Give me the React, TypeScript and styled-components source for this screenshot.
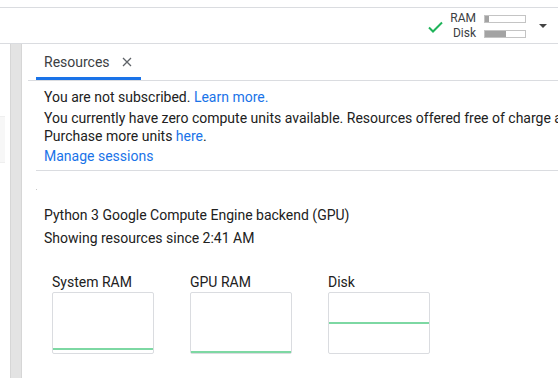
import React from "react";
import styled, { createGlobalStyle } from "styled-components";

/**
 * TYPES
 */
type UsageBarProps = {
  fill: number
}

type ChartProps = {
  label: string
  level: number
}

/**
 * STYLES
 */
const GlobalStyle = createGlobalStyle`
  html, body {
    margin: 0;
    padding: 0;
    background: #fff;
    overflow: hidden;
  }
  body {
    font-family: Roboto, "Liberation Sans", Arial, sans-serif;
    color: #212121;
  }
`;

const StyledPage = styled.div`
  width: 558px;
  height: 378px;
  display: flex;
  flex-direction: column;
  overflow: hidden;
`;

const StyledTopStrip = styled.div`
  height: 7px;
  border-bottom: 1px solid #dadce0;
`;

const StyledToolbar = styled.div`
  height: 35px;
  border-bottom: 1px solid #dadce0;
  display: flex;
  align-items: center;
  justify-content: flex-end;
  padding-right: 11px;
`;

const StyledCheck = styled.svg`
  width: 15px;
  height: 12px;
  margin: 3px 7px 0 0;
`;

const StyledUsageGrid = styled.div`
  display: grid;
  grid-template-columns: auto 42px;
  column-gap: 8px;
  row-gap: 0;
  align-items: center;
  margin-top: 1px;
`;

const StyledUsageLabel = styled.span`
  font-size: 12px;
  line-height: 15px;
  color: #3c4043;
  text-align: right;
`;

const StyledUsageBar = styled.div`
  height: 6px;
  border: 1px solid #c4c4c4;
  background: #fff;
  display: flex;
`;

const StyledUsageFill = styled.div`
  height: 100%;
  background: #a3a3a3;
`;

const StyledCaret = styled.div`
  width: 0;
  height: 0;
  margin-left: 13px;
  border-left: 4px solid transparent;
  border-right: 4px solid transparent;
  border-top: 4px solid #444;
`;

const StyledMain = styled.div`
  flex: 1;
  display: flex;
  min-height: 0;
`;

const StyledGutter = styled.div`
  width: 10px;
  padding-top: 72px;
`;

const StyledGutterCard = styled.div`
  width: 5px;
  height: 45px;
  background: #f7f7f7;
  border-top: 1px solid #efefef;
  border-bottom: 1px solid #efefef;
`;

const StyledScrollTrack = styled.div`
  width: 10px;
  background: #e3e3e3;
  border-left: 1px solid #d6d6d6;
  border-right: 1px solid #d6d6d6;
`;

const StyledPanel = styled.div`
  flex: 1;
  min-width: 0;
  display: flex;
  flex-direction: column;
  overflow: hidden;
`;

const StyledTabBar = styled.div`
  height: 36px;
  margin-left: 6px;
  border-bottom: 1px solid #dadce0;
  display: flex;
`;

const StyledTab = styled.div`
  margin-left: 8px;
  padding: 9px 9px 0 8px;
  display: flex;
  align-items: flex-start;
  gap: 12px;
  border-bottom: 3px solid #1a73e8;
  font-size: 14px;
  line-height: 18px;
  color: #3c4043;
`;

const StyledClose = styled.svg`
  width: 10px;
  height: 10px;
  margin-top: 4px;
`;

const StyledContent = styled.div`
  padding: 7px 0 0 22px;
  font-size: 14px;
  line-height: 18px;
  white-space: nowrap;
  overflow: hidden;
`;

const StyledLine = styled.div<{ $gap?: number }>`
  margin-top: ${p => p.$gap || 0}px;
`;

const StyledLink = styled.a`
  color: #1a73e8;
  text-decoration: none;
`;

const StyledDivider = styled.div`
  height: 1px;
  margin: 5px 0 0 14px;
  background: #dadce0;
`;

const StyledDot = styled.div`
  width: 1px;
  height: 1px;
  margin: 18px 0 0 14px;
  background: #c8c8c8;
`;

const StyledInfo = styled.div`
  padding: 14px 0 0 22px;
  font-size: 14px;
  line-height: 22px;
  white-space: nowrap;
  display: flex;
  flex-direction: column;
  gap: 1px;
`;

const StyledCharts = styled.div`
  padding: 24px 0 0 30px;
  display: flex;
  gap: 36px;
`;

const StyledChart = styled.div`
  width: 102px;
  display: flex;
  flex-direction: column;
  gap: 1px;
`;

const StyledChartLabel = styled.div`
  font-size: 14px;
  line-height: 18px;
  color: #212121;
`;

const StyledChartBox = styled.div`
  height: 60px;
  border: 1px solid #dadce0;
  border-radius: 2px;
  background: #fff;
`;

/**
 * COMPONENTS
 */
const UsageBar = ({ fill }: UsageBarProps) => (
  <StyledUsageBar>
    <StyledUsageFill style={{ width: `${fill}%` }} />
  </StyledUsageBar>
);

const Chart = ({ label, level }: ChartProps) => (
  <StyledChart>
    <StyledChartLabel>{label}</StyledChartLabel>
    <StyledChartBox>
      <svg width="100" height="60" viewBox="0 0 100 60">
        <line x1="0" x2="100" y1={level} y2={level} stroke="#7dd8a3" strokeWidth="2" />
      </svg>
    </StyledChartBox>
  </StyledChart>
);

export const App = () => {
  return (
    <>
      <GlobalStyle />
      <StyledPage>
        <StyledTopStrip />
        <StyledToolbar>
          <StyledCheck viewBox="0 0 15 12">
            <path d="M1 6.5 L5 10.5 L14 1.5" fill="none" stroke="#1fb35a" strokeWidth="2" />
          </StyledCheck>
          <StyledUsageGrid>
            <StyledUsageLabel>RAM</StyledUsageLabel>
            <UsageBar fill={10} />
            <StyledUsageLabel>Disk</StyledUsageLabel>
            <UsageBar fill={52} />
          </StyledUsageGrid>
          <StyledCaret />
        </StyledToolbar>

        <StyledMain>
          <StyledGutter>
            <StyledGutterCard />
          </StyledGutter>
          <StyledScrollTrack />
          <StyledPanel>
            <StyledTabBar>
              <StyledTab>
                Resources
                <StyledClose viewBox="0 0 10 10">
                  <path d="M1 1 L9 9 M9 1 L1 9" stroke="#5f6368" strokeWidth="1.3" />
                </StyledClose>
              </StyledTab>
            </StyledTabBar>

            <StyledContent>
              <StyledLine>
                You are not subscribed. <StyledLink href="#">Learn more.</StyledLink>
              </StyledLine>
              <StyledLine $gap={3}>
                You currently have zero compute units available. Resources offered free of charge are not guaranteed.
              </StyledLine>
              <StyledLine>
                Purchase more units <StyledLink href="#">here</StyledLink>.
              </StyledLine>
              <StyledLine $gap={2}>
                <StyledLink href="#">Manage sessions</StyledLink>
              </StyledLine>
            </StyledContent>
            <StyledDivider />
            <StyledDot />

            <StyledInfo>
              <div>Python 3 Google Compute Engine backend (GPU)</div>
              <div>Showing resources since 2:41 AM</div>
            </StyledInfo>

            <StyledCharts>
              <Chart label="System RAM" level={56} />
              <Chart label="GPU RAM" level={59} />
              <Chart label="Disk" level={30} />
            </StyledCharts>
          </StyledPanel>
        </StyledMain>
      </StyledPage>
    </>
  );
};

export default App;
